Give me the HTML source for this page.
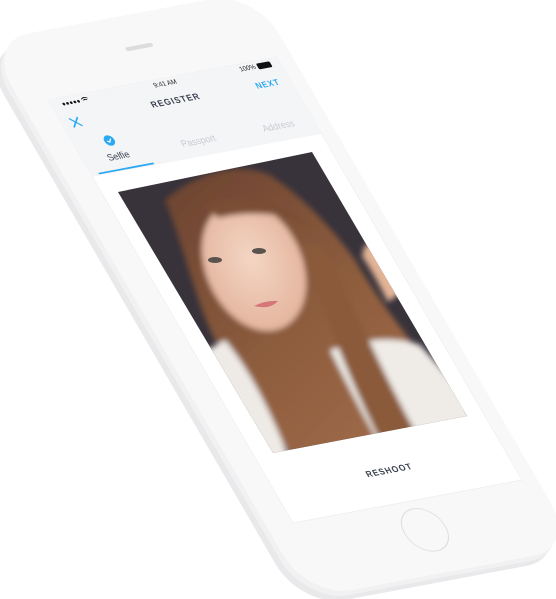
<!DOCTYPE html>
<html><head><meta charset="utf-8"><style>
html,body{margin:0;padding:0;background:#fff;width:556px;height:599px;overflow:hidden}
svg{display:block}
text{font-family:"Liberation Sans",sans-serif}
</style></head><body>
<svg width="556" height="599" viewBox="0 0 556 599" xmlns="http://www.w3.org/2000/svg">
<defs>
<clipPath id="ph"><polygon points="118,192 312,152 467,416 273,453"/></clipPath>
<linearGradient id="hair" x1="0" y1="0" x2="1" y2="1">
<stop offset="0" stop-color="#6a4230"/><stop offset="0.5" stop-color="#8f5e3e"/><stop offset="1" stop-color="#a77150"/></linearGradient>
<radialGradient id="face" cx="0.5" cy="0.45" r="0.6"><stop offset="0" stop-color="#f4d6c4"/><stop offset="1" stop-color="#e2b29a"/></radialGradient>
<filter id="bl"><feGaussianBlur stdDeviation="3"/></filter>
</defs>
<g transform="translate(-7,10)"><g transform="matrix(0.6107 -0.1147 0.3673 0.6342 48 100)">
<rect x="-42" y="-100" width="440" height="878" rx="70" fill="#e9e9eb"/>
</g></g>
<g transform="translate(-3,5)"><g transform="matrix(0.6107 -0.1147 0.3673 0.6342 48 100)">
<rect x="-42" y="-100" width="440" height="878" rx="70" fill="#f1f1f2"/>
</g></g>
<g transform="matrix(0.6107 -0.1147 0.3673 0.6342 48 100)">
<rect x="-42" y="-100" width="440" height="878" rx="70" fill="#f8f8f9"/>
<rect x="158" y="-54" width="44" height="6" rx="3" fill="#dcdcdf"/>
<rect x="0" y="0" width="375" height="667" fill="#ffffff" stroke="#ececee" stroke-width="1"/>
<rect x="0" y="0" width="375" height="121" fill="#f4f5f7"/>
<g fill="#111"><circle cx="20" cy="10" r="2"/><circle cx="26" cy="10" r="2"/><circle cx="32" cy="10" r="2"/><circle cx="38" cy="10" r="2"/><circle cx="44" cy="10" r="2"/></g>
<path d="M50 8 q5 -4 10 0 M52 10 q3 -2 6 0" stroke="#111" stroke-width="1.3" fill="none"/>
<text x="187" y="11" font-size="10" text-anchor="middle" fill="#222">9:41 AM</text>
<text x="322" y="11" font-size="10" text-anchor="middle" fill="#222">100%</text>
<rect x="338" y="4" width="22" height="9" rx="2" fill="#111"/>
<text x="188" y="39" font-size="13" font-weight="bold" letter-spacing="1.6" text-anchor="middle" fill="#3a4150">REGISTER</text>
<text x="338" y="40" font-size="12.5" font-weight="bold" letter-spacing="1.2" text-anchor="middle" fill="#2aa8f2">NEXT</text>
<path d="M15 32 L29 46 M29 32 L15 46" stroke="#2aa8f2" stroke-width="2.2"/>
<circle cx="56" cy="74" r="8" fill="#2aa8f2"/>
<path d="M52.5 74 l2.5 2.5 l4.5 -5" stroke="#fff" stroke-width="1.8" fill="none"/>
<text x="56" y="103" font-size="14" text-anchor="middle" fill="#3a4150">Selfie</text>
<text x="187" y="103" font-size="14" text-anchor="middle" fill="#c7cbd2">Passport</text>
<text x="318" y="103" font-size="14" text-anchor="middle" fill="#c7cbd2">Address</text>
<rect x="12" y="117" width="90" height="2.5" fill="#2aa8f2"/>
<text x="187" y="622" font-size="13" font-weight="bold" letter-spacing="1.5" text-anchor="middle" fill="#3a4150">RESHOOT</text>
<circle cx="189" cy="712" r="33" fill="#f8f8f9" stroke="#dedee1" stroke-width="1.5"/>
</g>
<g clip-path="url(#ph)">
<rect x="100" y="140" width="380" height="330" fill="#38323b"/>
<g filter="url(#bl)">
<path d="M165 200 C200 170 240 162 270 175 C300 195 330 225 355 260 C390 320 430 365 480 420 L480 470 L300 470 C270 420 240 380 215 340 C195 300 185 250 165 200 Z" fill="url(#hair)"/>
<path d="M190 360 L225 340 C250 370 270 410 290 460 L230 470 Z" fill="#eeeae6"/>
<path d="M330 350 C360 340 390 335 420 345 L470 400 L470 430 L380 445 C360 410 345 380 330 350 Z" fill="#efebe6"/>
<path d="M365 245 C385 240 400 262 402 292 L388 302 C378 282 370 268 362 256 Z" fill="#e3b496"/>
<ellipse cx="254" cy="266" rx="48" ry="68" transform="rotate(-25 254 266)" fill="url(#face)"/>
<path d="M205 205 C240 192 285 200 318 232 C298 216 258 208 218 218 Z" fill="#7a4e34"/>
<path d="M302 245 C322 305 340 360 380 440 L420 440 C380 370 352 300 322 245 Z" fill="#8a5a3b"/>
</g>
<ellipse cx="215" cy="260" rx="7" ry="3" fill="#59524d"/>
<ellipse cx="259" cy="251" rx="7" ry="3" fill="#59524d"/>
<path d="M254 306 q12 -6 24 -5 q-8 9 -24 5 Z" fill="#d7767a"/>
</g>
</svg>
</body></html>
